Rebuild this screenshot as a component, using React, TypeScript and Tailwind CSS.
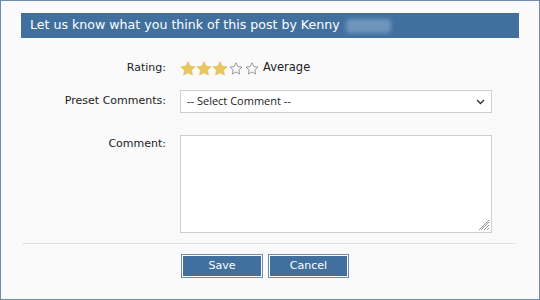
import React from "react";

const font = { fontFamily: '"DejaVu Sans", Verdana, sans-serif' };

function Star({ filled }: { filled: boolean }) {
  return (
    <svg width="16" height="15" viewBox="0 0 24 23" className="shrink-0">
      {filled ? (
        <path
          d="M12 0.8l3.4 7 7.7 1-5.6 5.3 1.4 7.6L12 18l-6.9 3.7 1.4-7.6L0.9 8.8l7.7-1z"
          fill="#e8c65e"
          stroke="#e2bd52"
          strokeWidth="0.8"
          strokeLinejoin="round"
        />
      ) : (
        <path
          d="M12 2.6l2.8 5.9 6.4.8-4.7 4.4 1.2 6.3L12 16.9l-5.7 3.1 1.2-6.3-4.7-4.4 6.4-.8z"
          fill="none"
          stroke="#8c8c8c"
          strokeWidth="1.3"
          strokeLinejoin="round"
        />
      )}
    </svg>
  );
}

export default function App() {
  return (
    <div
      className="w-[540px] h-[300px] border border-[#6d8cab] bg-[#fafafb] px-[20px] pt-[12px] text-[#222]"
      style={font}
    >
      <div className="h-[25px] bg-[#41709f] flex items-center pl-[9px] text-white text-[12.6px]">
        <span>Let us know what you think of this post by Kenny</span>
        <span className="ml-[6px] w-[45px] h-[14px] bg-[#6f95bd] rounded-sm blur-[2px]" />
      </div>

      <div className="grid grid-cols-[145px_312px] gap-x-[14px] text-[11px] mt-[21px]">
        <div className="text-right h-[18px] flex items-center justify-end">Rating:</div>
        <div className="h-[18px] flex items-center">
          <Star filled />
          <Star filled />
          <Star filled />
          <Star filled={false} />
          <Star filled={false} />
          <span className="ml-[3px] text-[11.5px]">Average</span>
        </div>

        <div className="text-right h-[23px] flex items-center justify-end mt-[13px]">
          Preset Comments:
        </div>
        <div className="h-[23px] mt-[13px] border border-[#cfcfcf] bg-white flex items-center justify-between pl-[6px] pr-[6px]">
          <span className="text-[11px]" style={{ fontFamily: '"Open Sans", sans-serif' }}>
            -- Select Comment --
          </span>
          <svg width="9" height="6" viewBox="0 0 9 6">
            <path d="M1 1l3.5 3.5L8 1" fill="none" stroke="#333" strokeWidth="1.4" />
          </svg>
        </div>

        <div className="text-right mt-[22px] pt-[1px]">Comment:</div>
        <div className="relative mt-[22px] h-[98px] border border-[#cfcfcf] bg-white">
          <svg width="11" height="11" viewBox="0 0 11 11" className="absolute right-[1px] bottom-[1px]">
            <path d="M10 2L2 10M10 5L5 10M10 8L8 10M10 0L0 10" stroke="#888" strokeWidth="0.9" />
          </svg>
        </div>
      </div>

      <div className="mt-[10px] ml-[1px] w-[494px] h-px bg-[#e2e2e2]" />

      <div className="flex gap-[5px] mt-[10px] pl-[160px] text-[11px]">
        <button className="w-[82px] h-[24px] bg-[#41709f] text-white border border-[#6d8cab] shadow-[inset_0_0_0_1px_#ffffff]">
          Save
        </button>
        <button className="w-[81px] h-[24px] bg-[#41709f] text-white border border-[#6d8cab] shadow-[inset_0_0_0_1px_#ffffff]">
          Cancel
        </button>
      </div>
    </div>
  );
}
